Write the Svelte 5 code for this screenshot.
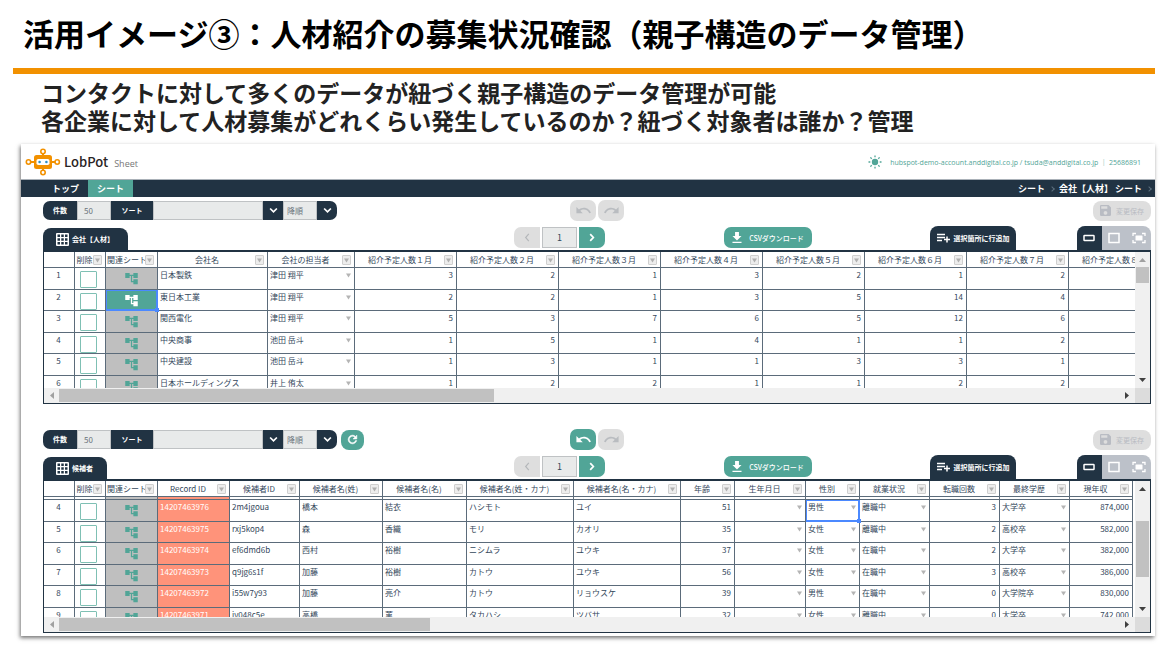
<script>
  const months = ['１', '２', '３', '４', '５', '６', '７', '８'];

  const companyColumns = [
    { label: '会社名', width: 110 },
    { label: '会社の担当者', width: 87, kind: 'pick' },
    ...months.map((m) => ({ label: `紹介予定人数${m}月`, width: 102, kind: 'num' }))
  ];
  const companyRows = [
    [1, '日本製鉄', '津田 翔平', 3, 2, 1, 3, 2, 1, 2, ''],
    [2, '東日本工業', '津田 翔平', 2, 2, 1, 3, 5, 14, 4, ''],
    [3, '関西電化', '津田 翔平', 5, 3, 7, 6, 5, 12, 6, ''],
    [4, '中央商事', '池田 岳斗', 1, 5, 1, 4, 1, 1, 2, ''],
    [5, '中央建設', '池田 岳斗', 1, 3, 1, 1, 3, 3, 1, ''],
    [6, '日本ホールディングス', '井上 侑太', 1, 2, 2, 1, 1, 2, 2, '']
  ];

  const personColumns = [
    { label: 'Record ID', width: 72, kind: 'record' },
    { label: '候補者ID', width: 70 },
    { label: '候補者名(姓)', width: 83 },
    { label: '候補者名(名)', width: 84 },
    { label: '候補者名(姓・カナ)', width: 107 },
    { label: '候補者名(名・カナ)', width: 107 },
    { label: '年齢', width: 54, kind: 'num' },
    { label: '生年月日', width: 71, kind: 'pick' },
    { label: '性別', width: 54, kind: 'pick' },
    { label: '就業状況', width: 70, kind: 'pick' },
    { label: '転職回数', width: 70, kind: 'num' },
    { label: '最終学歴', width: 70, kind: 'pick' },
    { label: '現年収', width: 63, kind: 'num' }
  ];
  const personRows = [
    [4, '14207463976', '2m4jgoua', '橋本', '結衣', 'ハシモト', 'ユイ', 51, '', '男性', '離職中', 3, '大学卒', '874,000'],
    [5, '14207463975', 'rxj5kop4', '森', '香織', 'モリ', 'カオリ', 35, '', '女性', '離職中', 2, '高校卒', '582,000'],
    [6, '14207463974', 'ef6dmd6b', '西村', '裕樹', 'ニシムラ', 'ユウキ', 37, '', '女性', '在職中', 2, '大学卒', '382,000'],
    [7, '14207463973', 'q9jg6s1f', '加藤', '裕樹', 'カトウ', 'ユウキ', 56, '', '女性', '在職中', 3, '高校卒', '386,000'],
    [8, '14207463972', 'i55w7y93', '加藤', '亮介', 'カトウ', 'リョウスケ', 39, '', '男性', '在職中', 0, '大学院卒', '830,000'],
    [9, '14207463971', 'iv048c5e', '高橋', '菫', 'タカハシ', 'ツバサ', 32, '', '女性', '離職中', 0, '大学卒', '742,000']
  ];

  // sel: [row number, column index]; column -1 is the related-sheet column
  const sheets = [
    {
      id: 'company', name: '会社【人材】', columns: companyColumns, rows: companyRows, sel: [2, -1],
      refresh: false, canUndo: false, scrolled: false, hThumb: 41, vTop: 0, vSize: 16, atTop: true
    },
    {
      id: 'person', name: '候補者', columns: personColumns, rows: personRows, sel: [4, 8],
      refresh: true, canUndo: true, scrolled: true, hThumb: 35, vTop: 25, vSize: 56, atTop: false
    }
  ];
  const isSel = (s, row, col) => s.sel[0] === row[0] && s.sel[1] === col;
  const tableWidth = (s) => 114 + s.columns.reduce((sum, c) => sum + c.width, 0);
</script>

{#snippet chevron()}
  <svg viewBox="0 0 8 6" width="9" height="7" aria-hidden="true"><path d="M1 1.2 4 4.2 7 1.2" fill="none" stroke="currentColor" stroke-width="1.5" /></svg>
{/snippet}

{#snippet undoIcon()}
  <svg viewBox="0 0 24 24" width="17" height="17" aria-hidden="true"><path fill="currentColor" d="M12.5 8c-2.65 0-5.05.99-6.9 2.6L2 7v9h9l-3.62-3.62c1.39-1.16 3.16-1.88 5.12-1.88 3.54 0 6.55 2.31 7.6 5.5l2.37-.78C21.08 11.03 17.15 8 12.5 8z" /></svg>
{/snippet}

{#snippet headCell(label)}
  <th scope="col">
    <div class="head">
      <span>{label}</span>
      <button class="filter" aria-label="{label} フィルター"><svg viewBox="0 0 6 5" width="5" height="5" aria-hidden="true"><path fill="#b0b0b0" d="M0 0h6L3 5z" /></svg></button>
    </div>
  </th>
{/snippet}

<main>
  <h1>活用イメージ③：人材紹介の募集状況確認（親子構造のデータ管理）</h1>
  <div class="rule"></div>
  <p class="lead">コンタクトに対して多くのデータが紐づく親子構造のデータ管理が可能<br />各企業に対して人材募集がどれくらい発生しているのか？紐づく対象者は誰か？管理</p>

  <div class="panel">
    <header>
      <svg viewBox="0 0 36 28" width="36" height="28" aria-hidden="true">
        <g fill="none" stroke="#f29100" stroke-width="1.6">
          <path d="M6 14h4M26 14h4M18 5.500v4M18 19v3.500" stroke-width="2" />
          <circle cx="3.500" cy="14" r="2.200" /><circle cx="32.200" cy="14" r="2.200" />
          <circle cx="18" cy="3.500" r="2.200" /><circle cx="18" cy="24.500" r="2.200" />
        </g>
        <rect x="9" y="7" width="18" height="14" rx="2.500" fill="#f29100" />
        <rect x="11.500" y="11" width="13" height="6" rx="1.800" fill="#fff" />
        <circle cx="14.600" cy="14" r="1.300" fill="#2b8fc6" /><circle cx="21.400" cy="14" r="1.300" fill="#2b8fc6" />
      </svg>
      <span class="brand">LobPot</span>
      <span class="product">Sheet</span>
      <div class="account">
        <svg viewBox="0 0 14 14" width="14" height="14" aria-hidden="true">
          <circle cx="7" cy="7" r="3.200" fill="#51a597" />
          <path d="M7 .5v1.800M7 11.700v1.800M.5 7h1.800M11.700 7h1.800M2.400 2.400l1.300 1.300M10.300 10.300l1.300 1.300M2.400 11.600l1.300-1.300M10.300 3.700l1.300-1.300" stroke="#51a597" stroke-width="1.300" />
        </svg>
        <span>hubspot-demo-account.anddigital.co.jp / tsuda@anddigital.co.jp ｜ 25686891</span>
      </div>
    </header>

    <nav>
      <a href="#top">トップ</a>
      <a href="#sheet" class="active" aria-current="page">シート</a>
      <div class="crumbs">
        <a href="#sheet">シート</a><i></i><a href="#company">会社【人材】 シート</a><i></i>
      </div>
    </nav>

    {#each sheets as s (s.id)}
      <section>
        <div class="tools">
          <div class="query">
            <label class="cap first" for="{s.id}-count">件数</label>
            <input class="count" id="{s.id}-count" value="50" />
            <label class="cap" for="{s.id}-sort">ソート</label>
            <div class="pick-wrap sort">
              <select id="{s.id}-sort"><option></option></select>
              <span class="drop">{@render chevron()}</span>
            </div>
            <div class="pick-wrap order">
              <select aria-label="並び順"><option>降順</option></select>
              <span class="drop last">{@render chevron()}</span>
            </div>
            {#if s.refresh}
              <button class="refresh" aria-label="再読み込み">
                <svg viewBox="0 0 24 24" width="13" height="13" aria-hidden="true"><path fill="#fff" stroke="#fff" d="M17.650 6.350C16.200 4.900 14.210 4 12 4c-4.420 0-7.990 3.580-7.990 8s3.570 8 7.990 8c3.730 0 6.840-2.550 7.730-6h-2.080c-.82 2.330-3.040 4-5.650 4-3.310 0-6-2.690-6-6s2.690-6 6-6c1.660 0 3.140.69 4.220 1.780L13 11h7V4l-2.350 2.350z" /></svg>
              </button>
            {/if}
          </div>
          <div class="history">
            <button class="pill" class:off={!s.canUndo} aria-label="元に戻す">{@render undoIcon()}</button>
            <button class="pill off flip" aria-label="やり直す">{@render undoIcon()}</button>
          </div>
          <button class="save">
            <svg viewBox="3 3 18 18" width="11" height="11" aria-hidden="true"><path fill="currentColor" d="M17 3H5c-1.110 0-2 .9-2 2v14c0 1.100.89 2 2 2h14c1.100 0 2-.9 2-2V7l-4-4zm-5 16c-1.660 0-3-1.340-3-3s1.340-3 3-3 3 1.340 3 3-1.340 3-3 3zm3-10H5V5h10v4z" /></svg>
            変更保存
          </button>
        </div>

        <div class="tabs">
          <h2>
            <svg viewBox="0 0 13 13" width="13" height="13" aria-hidden="true"><path fill="#fff" fill-rule="evenodd" d="M1 0h11a1 1 0 0 1 1 1v11a1 1 0 0 1-1 1H1a1 1 0 0 1-1-1V1a1 1 0 0 1 1-1zM1.500 1.500v2.500h2.500V1.500zM5.250 1.500v2.500h2.500V1.500zM9 1.500v2.500h2.500V1.500zM1.500 5.250v2.500h2.500v-2.500zM5.250 5.250v2.500h2.500v-2.500zM9 5.250v2.500h2.500v-2.500zM1.500 9v2.500h2.500V9zM5.250 9v2.500h2.500V9zM9 9v2.500h2.500V9z" /></svg>
            {s.name}
          </h2>
          <div class="pager">
            <button class="prev" aria-label="前のページ"><svg viewBox="0 0 6 10" width="6" height="9" aria-hidden="true"><path d="M5 1 1.500 5 5 9" fill="none" stroke="currentColor" stroke-width="1.300" /></svg></button>
            <input value="1" aria-label="ページ" />
            <button class="next" aria-label="次のページ"><svg viewBox="0 0 6 10" width="6" height="9" aria-hidden="true"><path d="M1 1.200 4.500 5 1 8.800" fill="none" stroke="currentColor" stroke-width="1.900" /></svg></button>
          </div>
          <div class="csv-slot">
            <button class="csv">
              <svg viewBox="5 3 14 17" width="10" height="11" aria-hidden="true"><path fill="#fff" d="M19 9h-4V3H9v6H5l7 7 7-7zM5 18v2h14v-2H5z" /></svg>
              CSVダウンロード
            </button>
          </div>
          <div>
            <button class="add">
              <svg viewBox="0 0 13 10" width="13" height="10" aria-hidden="true"><path d="M0 1.500h8M0 4.500h8M0 7.500h5M10 3.500v6M7 6.500h6" stroke="#fff" stroke-width="1.500" /></svg>
              選択箇所に行追加
            </button>
          </div>
          <div class="views">
            <button class="on" aria-label="標準表示"><svg viewBox="0 0 12 12" width="12" height="12" aria-hidden="true"><rect x="1" y="3.500" width="10" height="5" rx=".5" fill="none" stroke="#fff" stroke-width="1.500" /></svg></button>
            <button aria-label="拡大表示"><svg viewBox="0 0 12 12" width="12" height="12" aria-hidden="true"><rect x="1" y="1.500" width="10" height="9" fill="none" stroke="#fff" stroke-width="1.500" /></svg></button>
            <button aria-label="全画面表示"><svg viewBox="0 0 14 12" width="14" height="12" aria-hidden="true"><path d="M1 4V1.500h3M10 1.500h3V4M13 8v2.500h-3M4 10.500H1V8" fill="none" stroke="#fff" stroke-width="1.300" /><rect x="3.500" y="3.500" width="7" height="5" rx=".5" fill="#fff" /></svg></button>
          </div>
        </div>

        <div class="sheet">
          <div class="view">
            <table style:width="{tableWidth(s)}px">
              <colgroup>
                <col class="c-no" /><col class="c-del" /><col class="c-rel" />
                {#each s.columns as c}<col style:width="{c.width}px" />{/each}
              </colgroup>
              <thead>
                <tr>
                  <th></th>
                  {@render headCell('削除')}
                  {@render headCell('関連シート')}
                  {#each s.columns as c}{@render headCell(c.label)}{/each}
                </tr>
              </thead>
              <tbody>
                {#if s.scrolled}
                  <tr class="sliver" aria-hidden="true">
                    <td></td><td></td><td class="rel"></td>
                    {#each s.columns as c}<td class={c.kind}></td>{/each}
                  </tr>
                {/if}
                {#each s.rows as row, r}
                  <tr class:short={r % 2 === 1}>
                    <td class="no">{row[0]}</td>
                    <td class="del"><input type="checkbox" aria-label="{row[0]} 削除" /></td>
                    <td class="rel" class:hot={isSel(s, row, -1)} class:sel={isSel(s, row, -1)}>
                      <button aria-label="関連シートを開く"><svg viewBox="0 0 24 24" width="15" height="15" aria-hidden="true"><path fill="currentColor" d="M22 11V3h-7v3H9V3H2v8h7V8h2v10h4v3h7v-8h-7v3h-2V8h2v3z" /></svg></button>
                    </td>
                    {#each s.columns as c, i}
                      <td class={c.kind} class:sel={isSel(s, row, i)}>
                        {#if c.kind === 'pick'}
                          <div class="choice"><span>{row[i + 1]}</span><svg viewBox="0 0 6 5" width="5" height="5" aria-hidden="true"><path fill="#b4b4b4" d="M0 0h6L3 5z" /></svg></div>
                        {:else}{row[i + 1]}{/if}
                      </td>
                    {/each}
                  </tr>
                {/each}
              </tbody>
            </table>
          </div>
          <div class="vbar" aria-hidden="true">
            <svg class:dim={s.atTop} viewBox="0 0 7 4" width="7" height="4"><path fill="currentColor" d="M0 4h7L3.500 0z" /></svg>
            <div class="track"><div class="thumb" style:margin-top="{s.vTop}px" style:height="{s.vSize}px"></div></div>
            <svg viewBox="0 0 7 4" width="7" height="4"><path fill="currentColor" d="M0 0h7L3.500 4z" /></svg>
          </div>
          <div class="hbar" aria-hidden="true">
            <svg class="dim" viewBox="0 0 4 7" width="4" height="7"><path fill="currentColor" d="M4 0v7L0 3.500z" /></svg>
            <div class="track"><div class="thumb" style:width="{s.hThumb}%"></div></div>
            <svg viewBox="0 0 4 7" width="4" height="7"><path fill="currentColor" d="M0 0v7l4-3.500z" /></svg>
          </div>
          <div class="corner"></div>
        </div>
      </section>
    {/each}
  </div>
</main>

<style>
  :global(body) { background: #fff; }
  main { font-family: "Noto Sans CJK JP", "Noto Sans", sans-serif; color: #33475b; overflow: hidden; padding-bottom: 21px; }
  main :global(*) { box-sizing: border-box; }
  svg { display: block; flex: none; }
  button, input, select { font: inherit; color: inherit; margin: 0; padding: 0; border: 0; background: none; }
  button { display: flex; align-items: center; justify-content: center; cursor: pointer; white-space: nowrap; }
  a { color: inherit; text-decoration: none; }

  h1 { margin: 0; padding: 10px 23px 12px; font-size: 31px; line-height: 46px; font-weight: 700; color: #000; white-space: nowrap; }
  .rule { height: 6px; margin: 0 21px 0 13px; background: #f29100; }
  .lead { margin: 4px 21px 10px 41px; font-size: 23px; line-height: 28px; font-weight: 700; color: #222; white-space: nowrap; }

  .panel { margin: 0 21px; padding-bottom: 3px; background: #fff; box-shadow: -1px 2px 4px rgba(0, 0, 0, 0.55); }
  header { display: flex; align-items: center; height: 36px; padding-left: 4px; border-bottom: 1px solid #aab1b8; }
  .brand { margin-left: 3px; font-size: 13px; font-weight: 500; color: #2a2424; }
  .product { margin: 4px 0 0 6px; font-family: "Open Sans", sans-serif; font-size: 9px; color: #777; }
  .account { display: flex; align-items: center; gap: 8px; margin-left: auto; padding-right: 14px; font-family: "Open Sans", "Noto Sans CJK JP", sans-serif; font-size: 7px; color: #51a597; }

  nav { display: flex; height: 17px; padding-left: 22px; background: #213343; color: #fff; font-size: 9px; line-height: 17px; font-weight: 700; }
  nav > a { padding: 0 9px; }
  nav .active { background: #51a597; }
  .crumbs { display: flex; align-items: center; gap: 5px; margin-left: auto; padding-right: 4px; }
  .crumbs i { width: 4px; height: 4px; border: solid #5c6f7e; border-width: 1px 1px 0 0; transform: rotate(45deg); }

  section { padding: 3px 4px 0 22px; font-size: 7px; }
  section + section { padding-top: 25px; }
  .tools { display: grid; grid-template-columns: 1fr auto 1fr; align-items: center; height: 21px; margin-bottom: 5px; }
  .query { display: flex; align-items: center; height: 19px; font-size: 8px; color: #6a737b; }
  .cap { width: 42px; height: 19px; line-height: 19px; text-align: center; font-size: 7px; font-weight: 700; color: #fff; background: #213343; }
  .first { width: 34px; border-radius: 7px 0 0 7px; }
  .query input, .query select { height: 19px; border: 1px solid #bfc2c4; background: #e8eaea; appearance: none; border-radius: 0; }
  .count { width: 34px; padding-left: 6px; }
  .pick-wrap { display: flex; }
  .sort select { width: 110px; }
  .order select { width: 34px; padding-left: 3px; }
  .drop { display: grid; place-items: center; width: 20px; height: 19px; color: #fff; background: #213343; }
  .last { border-radius: 0 7px 7px 0; }
  .refresh { width: 23px; height: 20px; margin-left: 4px; border-radius: 8px; background: #51a597; }
  .history { display: flex; gap: 2px; }
  .pill { width: 26px; height: 21px; border-radius: 7px; background: #51a597; color: #fff; }
  .off { background: #dedede; color: #b9bcc0; }
  .flip svg { transform: scaleX(-1); }
  .save { justify-self: end; width: 58px; height: 20px; gap: 5px; border-radius: 8px; background: #dedede; color: #b9bcc3; }

  .tabs { display: grid; grid-template-columns: 471fr 210fr 206fr 147fr 74px; height: 24px; }
  h2 { display: flex; align-items: center; gap: 3px; align-self: end; justify-self: start; height: 22px; margin: 0; padding: 0 14px 0 13px; border-radius: 8px 8px 0 0; background: #213343; color: #fff; font-size: 7px; white-space: nowrap; }
  .pager { display: flex; gap: 2px; padding-top: 1px; }
  .pager button, .pager input { height: 21px; }
  .pager button { width: 26px; }
  .pager .prev { border-radius: 7px 0 0 7px; background: #dedede; color: #b4b7ba; }
  .pager .next { border-radius: 0 7px 7px 0; background: #51a597; color: #fff; }
  .pager input { width: 35px; border: 1px solid #bfc2c4; background: #e8eaea; font-size: 9px; text-align: center; }
  .csv-slot { padding-top: 1px; }
  .csv { width: 88px; height: 21px; gap: 7px; border-radius: 7px; background: #51a597; color: #fff; font-weight: 500; }
  .add { width: 86px; height: 24px; gap: 4px; border-radius: 8px 8px 0 0; background: #213343; color: #fff; font-weight: 700; }
  .views { display: flex; border-radius: 8px 8px 0 0; overflow: hidden; background: #bcc1c9; }
  .views button { flex: 1; }
  .views .on { background: #213343; }

  .sheet { display: grid; grid-template-columns: minmax(0, 1fr) 15px; grid-template-rows: 136px 15px; border: solid #213343; border-width: 2px 1px 1px; }
  .view { overflow: hidden; font-size: 8px; }
  table { table-layout: fixed; border-collapse: separate; border-spacing: 0; line-height: 14px; }
  .c-no, .c-del { width: 31px; }
  .c-rel { width: 52px; }
  th, td { padding: 0; border: solid #5b6b7a; border-width: 0 1px 1px 0; white-space: nowrap; vertical-align: top; }
  th { height: 16px; font-weight: 400; }
  tbody tr { height: 22px; }
  tbody .short { height: 21px; }
  tbody .sliver { height: 3px; }
  td { padding: 0 3px 0 2px; }
  .head { display: flex; align-items: center; height: 15px; padding: 1px 3px 0 1px; }
  .head span { flex: 1; min-width: 0; text-align: center; }
  .filter { flex: none; width: 9px; height: 10px; border: 1px solid #cfcfcf; border-radius: 1px; background: #ededed; }
  .no { text-align: center; }
  .num { text-align: right; }
  .record { background: #ff937a; color: #fff; }
  .del { padding: 3px 0 0 5px; }
  .sliver .del, .sliver td { padding: 0; }
  .del input { display: block; width: 17px; height: 17px; border: 1px solid #7fc0b4; border-radius: 1px; appearance: none; }
  .rel { background: #bfbfbf; color: #51a597; }
  .rel button { width: 100%; padding-top: 3px; }
  .hot { background: #51a597; color: #fff; }
  .choice { display: flex; align-items: center; justify-content: space-between; height: 14px; }
  .sel { position: relative; box-shadow: inset 0 0 0 1px #4b89ff; border-color: #4b89ff; }
  .sel::after { content: ""; position: absolute; right: -2px; bottom: -2px; width: 4px; height: 4px; background: #4b89ff; }

  .vbar, .hbar { display: flex; align-items: center; background: #f0f0f0; color: #404040; }
  .vbar { flex-direction: column; padding: 6px 0; }
  .hbar { padding: 0 6px; }
  .vbar .track { flex: 1; width: 13px; padding: 5px 0; }
  .hbar .track { flex: 1; padding: 0 6px 0 5px; }
  .hbar .thumb { height: 13px; }
  .thumb { background: #c1c1c1; }
  .dim { color: #a0a0a0; }
  .corner { background: #dcdcdc; }
</style>
